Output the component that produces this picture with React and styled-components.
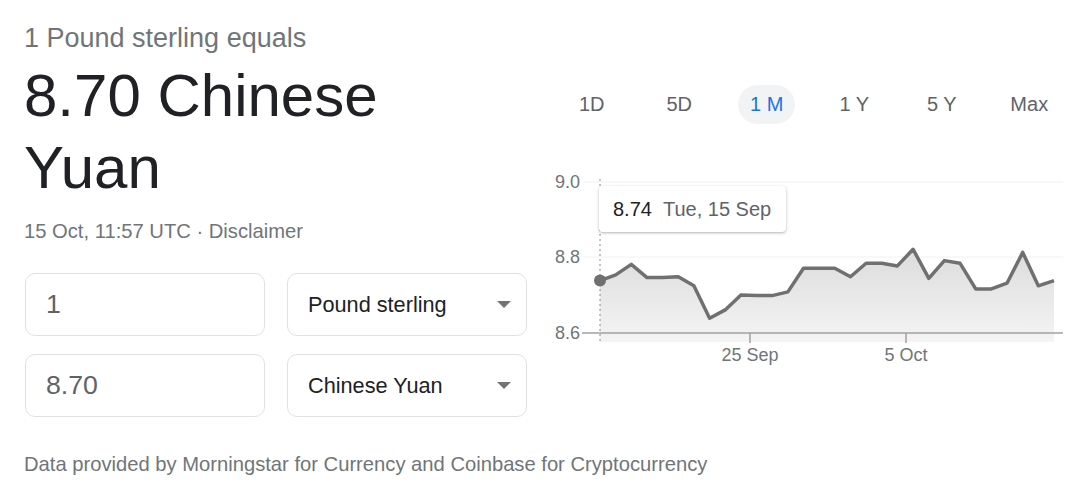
import React from 'react';
import styled, { createGlobalStyle } from 'styled-components';

const GlobalStyle = createGlobalStyle`
  body {
    margin: 0;
    background: #fff;
    font-family: "Liberation Sans", Arial, Helvetica, sans-serif;
  }
`;

// GBP -> CNY daily closes for the month
const rates = [
  8.738, 8.753, 8.781, 8.746, 8.746, 8.748, 8.724, 8.638, 8.66, 8.7,
  8.698, 8.698, 8.708, 8.771, 8.771, 8.771, 8.748, 8.784, 8.784, 8.777,
  8.821, 8.744, 8.791, 8.784, 8.716, 8.716, 8.731, 8.813, 8.724, 8.738,
];

const ranges = ['1D', '5D', '1 M', '1 Y', '5 Y', 'Max'];

const X0 = 52;
const X1 = 506;
const xFor = (i) => X0 + (i * (X1 - X0)) / (rates.length - 1);
const yFor = (r) => 17 + (9.0 - r) * 376.25;

const Chart = () => {
  const line = rates.map((r, i) => `${xFor(i).toFixed(1)},${yFor(r).toFixed(1)}`).join(' ');
  const area = `${X0},177 ${line} ${X1},177`;
  return (
    <svg width='525' height='205' viewBox='0 0 525 205'>
      <defs>
        <linearGradient id='fillGrad' x1='0' y1='0' x2='0' y2='1'>
          <stop offset='0%' stopColor='#dcdcdc' />
          <stop offset='100%' stopColor='#f4f4f4' />
        </linearGradient>
      </defs>
      <line x1='35' y1='17' x2='515' y2='17' stroke='#f1f1f1' strokeWidth='1' />
      <line x1='35' y1='92' x2='515' y2='92' stroke='#f1f1f1' strokeWidth='1' />
      <polygon points={area} fill='url(#fillGrad)' />
      <line x1='34' y1='168' x2='515' y2='168' stroke='#a0a0a0' strokeWidth='1.5' />
      <line x1='202' y1='168' x2='202' y2='178' stroke='#a0a0a0' strokeWidth='1.5' />
      <line x1='358' y1='168' x2='358' y2='178' stroke='#a0a0a0' strokeWidth='1.5' />
      <line x1={X0} y1='14' x2={X0} y2='177' stroke='#8a8a8a' strokeWidth='1' strokeDasharray='2 3' />
      <polyline points={line} fill='none' stroke='#707070' strokeWidth='3.5' strokeLinejoin='round' />
      <circle cx={X0} cy={yFor(rates[0])} r='6' fill='#707070' />
      <AxisText x='32' y='17' textAnchor='end' dominantBaseline='central'>9.0</AxisText>
      <AxisText x='32' y='92' textAnchor='end' dominantBaseline='central'>8.8</AxisText>
      <AxisText x='32' y='168' textAnchor='end' dominantBaseline='central'>8.6</AxisText>
      <AxisText x='202' y='190' textAnchor='middle' dominantBaseline='central'>25 Sep</AxisText>
      <AxisText x='358' y='190' textAnchor='middle' dominantBaseline='central'>5 Oct</AxisText>
    </svg>
  );
};

const App = () => {
  return (
    <>
      <GlobalStyle />
      <Page>
        <Row>
          <Left>
            <Subtitle>1 Pound sterling equals</Subtitle>
            <Result>8.70 Chinese Yuan</Result>
            <Stamp>15 Oct, 11:57 UTC · Disclaimer</Stamp>
            <Converter>
              <AmountBox>1</AmountBox>
              <CurrencyBox>
                Pound sterling
                <Caret />
              </CurrencyBox>
              <AmountBox>8.70</AmountBox>
              <CurrencyBox>
                Chinese Yuan
                <Caret />
              </CurrencyBox>
            </Converter>
          </Left>
          <Right>
            <Tabs>
              {ranges.map((r) => (
                <TabCell key={r}>
                  <Tab $active={r === '1 M'}>{r}</Tab>
                </TabCell>
              ))}
            </Tabs>
            <ChartWrap>
              <Chart />
              <Tooltip>
                <strong>8.74</strong>
                <span>Tue, 15 Sep</span>
              </Tooltip>
            </ChartWrap>
          </Right>
        </Row>
        <Footer>Data provided by Morningstar for Currency and Coinbase for Cryptocurrency</Footer>
      </Page>
    </>
  );
};

export default App;

const Page = styled.div`
  width: 1080px;
  height: 500px;
  box-sizing: border-box;
  padding: 22px 0 0 24px;
  overflow: hidden;
`;

const Row = styled.div`
  display: flex;
  gap: 20px;
`;

const Left = styled.div`
  width: 504px;
`;

const Subtitle = styled.div`
  font-size: 27px;
  line-height: 32px;
  color: #70757a;
`;

const Result = styled.div`
  margin-top: 6px;
  font-size: 60px;
  line-height: 72px;
  color: #202124;
  width: 420px;
`;

const Stamp = styled.div`
  margin-top: 15px;
  font-size: 20.2px;
  line-height: 24px;
  color: #70757a;
`;

const Converter = styled.div`
  margin-top: 30px;
  margin-left: 1px;
  display: grid;
  grid-template-columns: 240px 240px;
  column-gap: 22px;
  row-gap: 18px;
`;

const Box = styled.div`
  height: 63px;
  box-sizing: border-box;
  border: 1px solid #dfe1e5;
  border-radius: 10px;
  display: flex;
  align-items: center;
  padding: 0 15px 0 20px;
`;

const AmountBox = styled(Box)`
  font-size: 26.7px;
  color: #5f6368;
`;

const CurrencyBox = styled(Box)`
  font-size: 21.7px;
  color: #202124;
  justify-content: space-between;
`;

const Caret = styled.span`
  width: 0;
  height: 0;
  border-left: 7px solid transparent;
  border-right: 7px solid transparent;
  border-top: 7px solid #70757a;
`;

const Right = styled.div`
  width: 525px;
  padding-top: 63px;
`;

const Tabs = styled.div`
  display: flex;
`;

const TabCell = styled.div`
  flex: 1;
  display: flex;
  justify-content: center;
`;

const Tab = styled.div`
  height: 39px;
  line-height: 39px;
  padding: 0 12px;
  border-radius: 20px;
  font-size: 20px;
  color: ${(p) => (p.$active ? '#1a73e8' : '#5f6368')};
  background: ${(p) => (p.$active ? '#f1f3f4' : 'transparent')};
`;

const ChartWrap = styled.div`
  position: relative;
  margin-top: 41px;
  height: 205px;
`;

const AxisText = styled.text`
  font-family: "Liberation Sans", Arial, sans-serif;
  font-size: 18px;
  fill: #70757a;
`;

const Tooltip = styled.div`
  position: absolute;
  left: 51px;
  top: 21px;
  width: 187px;
  height: 46px;
  box-sizing: border-box;
  background: #fff;
  border-radius: 4px;
  box-shadow: 0 1px 3px rgba(0, 0, 0, 0.3);
  display: flex;
  align-items: center;
  gap: 11px;
  padding-left: 14px;
  font-size: 20px;

  strong {
    font-weight: normal;
    color: #202124;
  }

  span {
    color: #5f6368;
  }
`;

const Footer = styled.div`
  margin-top: 35px;
  font-size: 20.2px;
  line-height: 24px;
  color: #70757a;
`;
